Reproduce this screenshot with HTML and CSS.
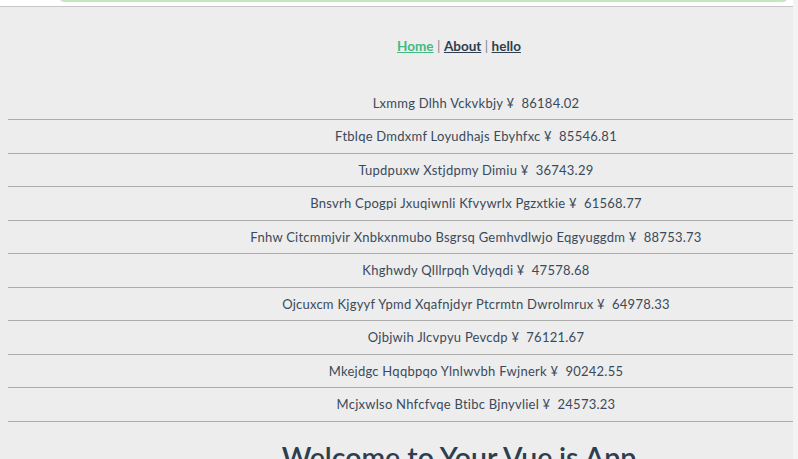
FILE: index.html
```html
<!DOCTYPE html>
<html>
<head>
<meta charset="utf-8">
<link rel="stylesheet" href="styles.css">
</head>
<body>
<div class="top"><div class="greenbox"></div></div>
<div class="panel">
  <nav class="nav"><a class="active" href="#">Home</a><span class="sep"> | </span><a href="#">About</a><span class="sep"> | </span><a href="#">hello</a></nav>
  <ul class="list">
    <li>Lxmmg Dlhh Vckvkbjy ¥&nbsp; 86184.02</li>
    <li>Ftblqe Dmdxmf Loyudhajs Ebyhfxc ¥&nbsp; 85546.81</li>
    <li>Tupdpuxw Xstjdpmy Dimiu ¥&nbsp; 36743.29</li>
    <li>Bnsvrh Cpogpi Jxuqiwnli Kfvywrlx Pgzxtkie ¥&nbsp; 61568.77</li>
    <li>Fnhw Citcmmjvir Xnbkxnmubo Bsgrsq Gemhvdlwjo Eqgyuggdm ¥&nbsp; 88753.73</li>
    <li>Khghwdy Qlllrpqh Vdyqdi ¥&nbsp; 47578.68</li>
    <li>Ojcuxcm Kjgyyf Ypmd Xqafnjdyr Ptcrmtn Dwrolmrux ¥&nbsp; 64978.33</li>
    <li>Ojbjwih Jlcvpyu Pevcdp ¥&nbsp; 76121.67</li>
    <li>Mkejdgc Hqqbpqo Ylnlwvbh Fwjnerk ¥&nbsp; 90242.55</li>
    <li>Mcjxwlso Nhfcfvqe Btibc Bjnyvliel ¥&nbsp; 24573.23</li>
  </ul>
  <h1 class="title">Welcome to Your Vue.js App</h1>
</div>
</body>
</html>
```
FILE: styles.css
```css
html, body {
  margin: 0;
  padding: 0;
  background: #f3f3f3;
  overflow: hidden;
  height: 459px;
  font-family: Lato, "Noto Sans", sans-serif;
  color: #2c3e50;
}
.top {
  height: 6px;
  background: #ffffff;
  display: flex;
  padding: 0 6px 0 60px;
  width: 793px;
  box-sizing: border-box;
}
.greenbox {
  flex: 1;
  height: 2px;
  margin-top: -2px;
  border: 2px solid #c3e8bd;
  border-top: none;
  border-radius: 0 0 8px 8px;
}
.panel {
  width: 793px;
  background: #ededed;
  border-top: 1px solid #c6c6c6;
  height: 460px;
}
.nav {
  padding: 31px 0 0 125px;
  height: 17px;
  line-height: 17px;
  text-align: center;
  font-size: 13.5px;
  font-weight: 700;
  color: #2c3e50;
}
.nav a {
  color: #2c3e50;
  text-decoration: underline;
}
.nav a.active {
  color: #42b983;
}
.sep {
  font-weight: 400;
  color: #7d8791;
}
.list {
  list-style: none;
  margin: 31.5px 0 0 8px;
  padding: 0;
}
.list li {
  height: 32.5px;
  line-height: 32.5px;
  border-bottom: 1px solid #ababab;
  text-align: center;
  padding-left: 151px;
  font-size: 13px;
  letter-spacing: 0.25px;
  color: #3a4a5a;
}
.title {
  margin: 18px 0 0 0;
  padding-left: 125px;
  text-align: center;
  font-size: 28.5px;
  font-weight: 600;
  color: #2c3e50;
}
```
